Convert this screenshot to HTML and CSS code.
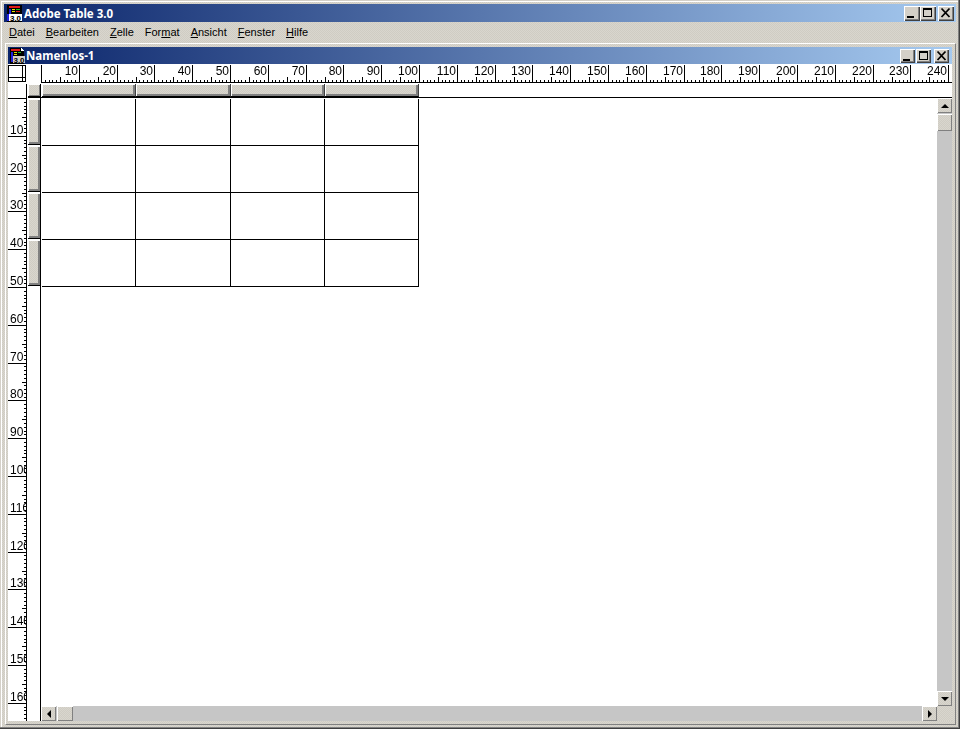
FILE: index.html
```html
<!DOCTYPE html>
<html lang="de">
<head>
<meta charset="UTF-8">
<title>Adobe Table 3.0</title>
<link rel="stylesheet" href="styles.css">
</head>
<body>
<div class="app">
  <div class="titlebar main-title">
    <svg class="app-icon" width="16" height="17" viewBox="0 0 16 17" shape-rendering="crispEdges">
      <rect x="1" y="0" width="15" height="17" fill="#000"/>
      <rect x="3" y="1" width="11" height="2" fill="#e01818"/>
      <rect x="3" y="4" width="2" height="5" fill="#2020e0"/>
      <rect x="6" y="4" width="3" height="1" fill="#e0e000"/>
      <rect x="10" y="4" width="4" height="1" fill="#18c018"/>
      <rect x="6" y="6" width="3" height="1" fill="#e0e000"/>
      <rect x="10" y="6" width="4" height="1" fill="#e01818"/>
      <rect x="1" y="9" width="2" height="7" fill="#2020e0"/>
      <rect x="3" y="9" width="13" height="7" fill="#fff"/>
      <text class="icon-num" x="9.5" y="15.5" text-anchor="middle">3.0</text>
    </svg>
    <span class="title-text">Adobe Table 3.0</span>
    <div class="win-buttons">
      <button class="win-btn"><svg width="15" height="14" shape-rendering="crispEdges"><rect x="3" y="10" width="7" height="2" fill="#000"/></svg></button>
      <button class="win-btn"><svg width="15" height="14" shape-rendering="crispEdges"><path d="M3 2h9v9H3zM4 4v6h7V4z" fill="#000" fill-rule="evenodd"/></svg></button>
      <button class="win-btn close"><svg width="15" height="14"><path d="M3.5 2.5l8 8.5M11.5 2.5l-8 8.5" stroke="#000" stroke-width="1.8"/></svg></button>
    </div>
  </div>

  <div class="menubar">
    <span class="menu-item"><u>D</u>atei</span>
    <span class="menu-item"><u>B</u>earbeiten</span>
    <span class="menu-item"><u>Z</u>elle</span>
    <span class="menu-item">For<u>m</u>at</span>
    <span class="menu-item"><u>A</u>nsicht</span>
    <span class="menu-item"><u>F</u>enster</span>
    <span class="menu-item"><u>H</u>ilfe</span>
  </div>

  <div class="doc">
    <div class="titlebar doc-title">
      <svg class="doc-icon" width="17" height="16" viewBox="0 0 17 16" shape-rendering="crispEdges">
        <path d="M2 0h11l3 3v13H2z" fill="#000"/>
        <path d="M13 0l3 3h-3z" fill="#fff"/>
        <rect x="3" y="1" width="9" height="2" fill="#e01818"/>
        <rect x="3" y="4" width="2" height="10" fill="#2020e0"/>
        <rect x="6" y="4" width="3" height="1" fill="#e0e000"/>
        <rect x="10" y="4" width="3" height="1" fill="#18c018"/>
        <rect x="6" y="6" width="3" height="1" fill="#e0e000"/>
        <rect x="5" y="8" width="12" height="7" fill="#d4d0c8"/>
        <text class="icon-num" x="11" y="14.5" text-anchor="middle">3.0</text>
      </svg>
      <span class="title-text">Namenlos-1</span>
      <div class="win-buttons">
        <button class="win-btn"><svg width="15" height="14" shape-rendering="crispEdges"><rect x="3" y="10" width="7" height="2" fill="#000"/></svg></button>
        <button class="win-btn"><svg width="15" height="14" shape-rendering="crispEdges"><path d="M3 2h9v9H3zM4 4v6h7V4z" fill="#000" fill-rule="evenodd"/></svg></button>
        <button class="win-btn close"><svg width="15" height="14"><path d="M3.5 2.5l8 8.5M11.5 2.5l-8 8.5" stroke="#000" stroke-width="1.8"/></svg></button>
      </div>
    </div>

    <div class="sheet">
      <div class="corner"><div class="corner-box"></div></div>
      <div class="ruler-h" id="ruler-h"></div>
      <div class="ruler-v" id="ruler-v"></div>

      <div class="row-heads">
        <div class="head head-corner"></div>
        <div class="head row-head"></div>
        <div class="head row-head"></div>
        <div class="head row-head"></div>
        <div class="head row-head"></div>
      </div>

      <div class="col-heads">
        <div class="head col-head"></div>
        <div class="head col-head"></div>
        <div class="head col-head"></div>
        <div class="head col-head"></div>
      </div>

      <div class="canvas">
        <div class="table">
          <div class="cell"></div><div class="cell"></div><div class="cell"></div><div class="cell"></div>
          <div class="cell"></div><div class="cell"></div><div class="cell"></div><div class="cell"></div>
          <div class="cell"></div><div class="cell"></div><div class="cell"></div><div class="cell"></div>
          <div class="cell"></div><div class="cell"></div><div class="cell"></div><div class="cell"></div>
        </div>
      </div>

      <div class="scrollbar-v">
        <button class="scroll-btn"><span class="arrow arrow-up"></span></button>
        <div class="thumb"></div>
        <div class="track"></div>
        <button class="scroll-btn"><span class="arrow arrow-down"></span></button>
      </div>
      <div class="scrollbar-h">
        <button class="scroll-btn"><span class="arrow arrow-left"></span></button>
        <div class="thumb"></div>
        <div class="track"></div>
        <button class="scroll-btn"><span class="arrow arrow-right"></span></button>
      </div>
      <div class="scroll-corner"></div>
    </div>
  </div>
</div>
<script src="ruler.js"></script>
</body>
</html>
```

FILE: styles.css
```css
:root {
  --face: #d4d0c8;
  --dither: repeating-conic-gradient(#d9d6ce 0 25%, #cfccc3 0 50%) 0 0 / 2px 2px;
  --track: #c6c6c6;
  --col-widths: 94px 95px 94px 94px;
}

* {
  box-sizing: border-box;
}

body {
  margin: 0;
  background: var(--face);
  overflow: hidden;
}

.app {
  width: 960px;
  height: 729px;
  padding: 4px 4px 0;
  background: var(--dither);
  box-shadow: inset -1px -1px 0 #404040, inset -2px -2px 0 #808080, inset 1px 1px 0 #d4d0c8, inset 2px 2px 0 #fff;
  display: flex;
  flex-direction: column;
}

.titlebar {
  display: flex;
  align-items: center;
  background: linear-gradient(to right, #0a246a, #a6caf0);
  color: #fff;
  font-family: "Noto Sans", sans-serif;
  font-weight: 700;
  font-size: 11.5px;
}

.main-title {
  height: 18px;
  padding: 0 2px;
}

.app-icon {
  flex: none;
  margin-top: 1px;
}

.icon-num {
  font-family: "Liberation Sans", sans-serif;
  font-size: 8px;
  font-weight: 700;
  fill: #000;
}

.title-text {
  margin-left: 2px;
  white-space: nowrap;
}

.doc-title .title-text {
  margin-left: 1px;
}

.win-buttons {
  margin-left: auto;
  display: flex;
  align-items: center;
}

.win-btn {
  width: 15px;
  height: 14px;
  padding: 0;
  border: 0;
  display: block;
  background: var(--face);
  box-shadow: inset 1px 1px 0 #fff, inset -1px -1px 0 #404040, inset -2px -2px 0 #808080;
}

.win-btn svg {
  display: block;
}

.win-btn + .win-btn {
  margin-left: 1px;
}

.win-btn + .win-btn.close {
  margin-left: 3px;
}

.main-title .win-btn {
  width: 16px;
  height: 15px;
  margin-left: 0;
}

.main-title .win-btn.close {
  margin-left: 2px;
}

.menubar {
  height: 20px;
  padding-left: 5px;
  display: flex;
  align-items: center;
  font-family: "Liberation Sans", sans-serif;
  font-size: 11px;
  color: #000;
}

.menu-item {
  margin-right: 11px;
}

.doc {
  width: 951px;
  height: 682px;
  margin: 1px 0 0 1px;
  padding: 3px 3px 3px 2px;
  border: 1px solid;
  border-color: #fff #808080 #808080 #fff;
  display: flex;
  flex-direction: column;
}

.doc-title {
  height: 17px;
  flex: none;
  padding-right: 3px;
}

.doc-icon {
  flex: none;
}

.sheet {
  flex: 1;
  display: grid;
  grid-template-columns: 19px 14px 1fr 15px;
  grid-template-rows: 20px 14px 1fr 15px;
  background: #fff;
}

.corner {
  grid-column: 1 / 3;
  grid-row: 1;
  padding-top: 1px;
}

.corner-box {
  width: 18px;
  height: 17px;
  border: 1px solid #000;
  position: relative;
}

.corner-box::before {
  content: "";
  position: absolute;
  left: 13px;
  top: 0;
  bottom: 0;
  border-left: 1px solid #000;
}

.corner-box::after {
  content: "";
  position: absolute;
  left: 0;
  right: 0;
  top: 11px;
  border-top: 1px solid #000;
}

.ruler-h {
  grid-column: 3 / 5;
  grid-row: 1;
  overflow: hidden;
}

.ruler-v {
  grid-column: 1;
  grid-row: 2 / 5;
  overflow: hidden;
}

.ruler-h svg,
.ruler-v svg {
  display: block;
  will-change: opacity;
}

.ruler-h text,
.ruler-v text {
  font-family: "Liberation Sans", sans-serif;
  font-size: 12px;
  fill: #000;
}

.row-heads {
  grid-column: 2;
  grid-row: 2 / 5;
  border-right: 1px solid #000;
  padding-left: 1px;
}

.head {
  background: var(--dither);
  box-shadow: inset 1px 1px 0 #fff, inset -2px -2px 0 #808080;
}

.head-corner {
  width: 12px;
  height: 12px;
  margin-bottom: 3px;
  box-shadow: inset 1px 1px 0 #fff, inset -1px -1px 0 #808080, 0 2px 0 #000;
}

.row-head {
  width: 12px;
  height: 46px;
  margin-bottom: 1px;
  border-bottom: 1px solid #000;
}

.col-heads {
  grid-column: 3 / 5;
  grid-row: 2;
  display: grid;
  grid-template-columns: var(--col-widths);
  justify-content: start;
  padding-left: 1px;
  border-bottom: 1px solid #000;
}

.col-head {
  border-right: 1px solid #404040;
  border-bottom: 1px solid #000;
}

.canvas {
  grid-column: 3;
  grid-row: 3;
  min-height: 0;
  padding: 1px 0 0 1px;
}

.table {
  display: grid;
  grid-template-columns: var(--col-widths);
  grid-auto-rows: 47px;
  justify-content: start;
}

.cell {
  border-right: 1px solid #000;
  border-bottom: 1px solid #000;
}

.scrollbar-v {
  grid-column: 4;
  grid-row: 3;
  display: flex;
  flex-direction: column;
  background: var(--track);
}

.scrollbar-h {
  grid-column: 3;
  grid-row: 4;
  display: flex;
  background: var(--track);
}

.scroll-corner {
  grid-column: 4;
  grid-row: 4;
  background: var(--dither);
}

.scroll-btn,
.thumb {
  flex: none;
  width: 15px;
  height: 15px;
  padding: 0;
  border: 0;
  background: var(--dither);
  box-shadow: inset 1px 1px 0 #fff, inset -1px -1px 0 #808080;
  display: flex;
  align-items: center;
  justify-content: center;
}

.scrollbar-v .thumb {
  height: 17px;
  margin-top: 1px;
}

.scrollbar-h .thumb {
  width: 16px;
  margin-left: 1px;
}

.track {
  flex: 1;
}

.arrow {
  width: 0;
  height: 0;
  border: 4px solid transparent;
}

.arrow-up {
  border-top: 0;
  border-bottom-color: #000;
}

.arrow-down {
  border-bottom: 0;
  border-top-color: #000;
}

.arrow-left {
  border-left: 0;
  border-right-color: #000;
}

.arrow-right {
  border-right: 0;
  border-left-color: #000;
}
```

FILE: ruler.js
```js
// Draws both rulers: 3.78px per unit, long tick and label every 10 units
var UNIT = 3.78;
var NS = 'http://www.w3.org/2000/svg';

function makeSvg(w, h) {
  var svg = document.createElementNS(NS, 'svg');
  svg.setAttribute('width', w);
  svg.setAttribute('height', h);
  svg.setAttribute('shape-rendering', 'crispEdges');
  return svg;
}

function addLine(svg, x1, y1, x2, y2) {
  var l = document.createElementNS(NS, 'rect');
  l.setAttribute('x', x1);
  l.setAttribute('y', y1);
  l.setAttribute('width', Math.max(x2 - x1, 1));
  l.setAttribute('height', Math.max(y2 - y1, 1));
  svg.appendChild(l);
}

function addLabel(svg, x, y, anchor, value) {
  var t = document.createElementNS(NS, 'text');
  t.setAttribute('x', x);
  t.setAttribute('y', y);
  t.setAttribute('text-anchor', anchor);
  t.textContent = value;
  svg.appendChild(t);
}

function drawHorizontal() {
  var box = document.getElementById('ruler-h');
  var w = box.clientWidth;
  var svg = makeSvg(w, 20);
  addLine(svg, 0, 18, w, 19);
  for (var i = 0; i * UNIT < w; i++) {
    var x = Math.round(i * UNIT);
    if (i % 10 === 0) {
      addLine(svg, x, 1, x + 1, 18);
      if (i > 0) addLabel(svg, x - 1, 11, 'end', i);
    } else if (i % 5 === 0) {
      addLine(svg, x, 13, x + 1, 18);
    } else {
      addLine(svg, x, 16, x + 1, 18);
    }
  }
  box.appendChild(svg);
}

function drawVertical() {
  var box = document.getElementById('ruler-v');
  var h = box.clientHeight;
  var svg = makeSvg(19, h);
  var top = 14; // the first row of the table starts here
  addLine(svg, 18, 0, 19, h);
  for (var i = 0; top + i * UNIT < h; i++) {
    var y = top + Math.round(i * UNIT);
    if (i % 10 === 0) {
      addLine(svg, 0, y, 18, y + 1);
      if (i > 0) addLabel(svg, 2, y - 2, 'start', i);
    } else if (i % 5 === 0) {
      addLine(svg, 14, y, 18, y + 1);
    } else {
      addLine(svg, 16, y, 18, y + 1);
    }
  }
  box.appendChild(svg);
}

drawHorizontal();
drawVertical();
```
